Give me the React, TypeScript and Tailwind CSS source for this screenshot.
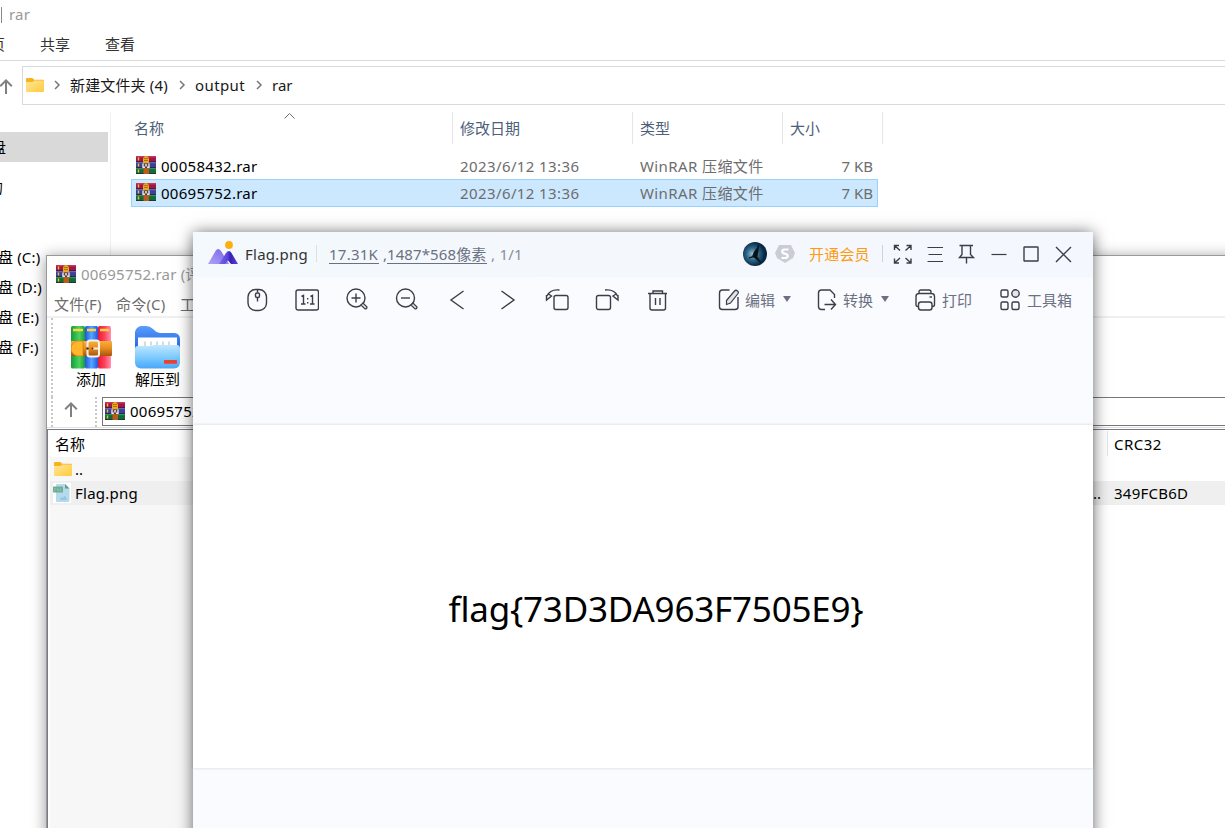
import React from "react";

function RarIcon() {
  return (
    <svg width="20" height="18" viewBox="0 0 20 18" className="block shrink-0">
      <rect x="0" y="0" width="20" height="6" fill="#a5153f" />
      <rect x="0" y="0" width="20" height="1.5" fill="#c23a60" />
      <rect x="0" y="6" width="20" height="6" fill="#3f3f98" />
      <rect x="0" y="6" width="20" height="1.2" fill="#6468bd" />
      <rect x="0" y="12" width="20" height="6" fill="#0f6b38" />
      <rect x="0" y="12" width="20" height="1.2" fill="#2f9455" />
      <path d="M0 5.5h20M0 11.5h20M0 17.5h20" stroke="#33203a" strokeWidth="0.8" />
      <path d="M2.5 1.5v3M2.5 7.5v3M2.5 13.5v3" stroke="#f3bd2b" strokeWidth="1.4" />
      <path d="M7.5 12h5.500v6H7.500z" fill="#b75d1c" />
      <path d="M7 7.500V2.600Q7.500 0 10 0t3 2.600V7.500z" fill="#e8aa20" />
      <path d="M8 2.500h4M8 4.500h4" stroke="#a45f0a" strokeWidth="0.800" />
      <path d="M8 7.500h4v4H8z" fill="#5c4540" />
      <path d="M7 7.500v3.800h2M13 7.500v3.800h-2" fill="none" stroke="#e9e4e4" strokeWidth="1.400" />
      <path d="M10 8v2.500" stroke="#fff" strokeWidth="1.300" />
    </svg>
  );
}

function Folder() {
  return (
    <svg width="18" height="14" viewBox="0 0 18 14" className="block shrink-0">
      <defs>
        <linearGradient id="fold" x1="0" y1="0" x2="1" y2="1">
          <stop offset="0" stopColor="#ffe69b" />
          <stop offset="1" stopColor="#ffcb3d" />
        </linearGradient>
      </defs>
      <path d="M0 1q0-1 1-1h5.500l1.600 1.700H17q1 0 1 1V12H0z" fill="#f8b31c" />
      <path d="M0 4h6.800l1.500-1.500H18V13q0 1-1 1H1q-1 0-1-1z" fill="url(#fold)" />
    </svg>
  );
}

function PngFile() {
  return (
    <svg width="18" height="20" viewBox="0 0 18 20" className="block shrink-0">
      <rect width="18" height="20" fill="#fff" />
      <path d="M3 2q0-1 1-1h8l4.500 4.500V18q0 1-1 1H4q-1 0-1-1z" fill="#b5d9ed" />
      <path d="M12 1v4.500h4.500z" fill="#5f9f8f" />
      <path d="M7 17q1-4 3-2 2-5 4 2z" fill="#94c6e2" />
      <rect x="0" y="3.500" width="10" height="6" rx="0.500" fill="#6fae96" />
      <path d="M1.500 8V5.500h1.300V7M4.500 8V5.500l1.500 2.500V5.500M8.500 5.500H7.500V8h1.200" fill="none" stroke="#94c3b1" strokeWidth="0.600" />
    </svg>
  );
}

function Books() {
  return (
    <svg width="41" height="43" viewBox="0 0 41 43" className="block">
      <defs>
        <linearGradient id="bg1"><stop stopColor="#159c3a" /><stop offset="0.6" stopColor="#4bd35f" /><stop offset="1" stopColor="#1a9a3c" /></linearGradient>
        <linearGradient id="bb1"><stop stopColor="#2553e0" /><stop offset="0.5" stopColor="#55a6ff" /><stop offset="1" stopColor="#2456df" /></linearGradient>
        <linearGradient id="br1"><stop stopColor="#e21d37" /><stop offset="0.5" stopColor="#ff4157" /><stop offset="1" stopColor="#ff91b4" /></linearGradient>
        <linearGradient id="belt" x1="0" y1="0" x2="0" y2="1"><stop stopColor="#f9b13c" /><stop offset="0.5" stopColor="#e58b1d" /><stop offset="1" stopColor="#a9530c" /></linearGradient>
      </defs>
      <rect x="0" y="0" width="14" height="42.500" rx="1.500" fill="url(#bg1)" />
      <rect x="14" y="0" width="13" height="42.500" rx="1.500" fill="url(#bb1)" />
      <rect x="27" y="0" width="13" height="42.500" rx="1.500" fill="url(#br1)" />
      <path d="M2 4h10M16 4h9M29 4h9" stroke="#ffd341" strokeWidth="2.400" />
      <rect x="0" y="15" width="41" height="15" rx="1" fill="url(#belt)" />
      <path d="M12 15H6Q0 17 0 22.500T6 30h6z" fill="#ffb52c" stroke="#d98310" strokeWidth="0.800" />
      <rect x="16.500" y="14.500" width="11.500" height="16" rx="2.500" fill="none" stroke="#f5f1ee" strokeWidth="2" />
      <path d="M22 22.500h6" stroke="#eee" strokeWidth="2" />
      <circle cx="16.500" cy="22.500" r="1.300" fill="#5b2c08" />
      <circle cx="21.500" cy="22.500" r="1" fill="#613309" />
    </svg>
  );
}

function BlueFolder() {
  return (
    <svg width="46" height="43" viewBox="0 0 46 43" className="block">
      <defs>
        <linearGradient id="bf" x1="0" y1="0" x2="0" y2="1"><stop stopColor="#5a9dfb" /><stop offset="0.500" stopColor="#2d6fe9" /></linearGradient>
        <linearGradient id="ff" x1="0" y1="0" x2="0" y2="1"><stop stopColor="#c1e8ff" /><stop offset="0.500" stopColor="#80ccff" /><stop offset="1" stopColor="#49a6f8" /></linearGradient>
      </defs>
      <path d="M0 6Q1 1 6 0h5q4 0 7 3 3 3.500 7 4h15q5 1 5 6v24H0z" fill="url(#bf)" />
      <path d="M3 11.500h39v14H3z" fill="#fff" />
      <path d="M10 15.500v5M16 15.500v4M22 15.500v4M28 15.500v4M34 15.500v4" stroke="#c9ced8" strokeWidth="1.500" />
      <path d="M0 23q0-3 3-3h11q3 0 5-1h23q3 0 3 4v13q0 6-6 6.500H6Q0 42 0 36z" fill="url(#ff)" />
      <rect x="29" y="34" width="13" height="3.800" rx="0.500" fill="#e8432f" />
    </svg>
  );
}

function Chevron() {
  return (
    <svg width="7" height="10" viewBox="0 0 7 10" className="block shrink-0" fill="none" stroke="#777" strokeWidth="1.500">
      <path d="M1 1l4 4-4 4" />
    </svg>
  );
}

function UpArrow() {
  return (
    <svg width="14" height="16" viewBox="0 0 14 16" className="block shrink-0" fill="none" stroke="#808080" strokeWidth="2">
      <path d="M7 15V1.500M1.200 7.200L7 1.400l5.800 5.800" />
    </svg>
  );
}

function Icon({ children, className = "" }: { children: React.ReactNode; className?: string }) {
  return (
    <svg width="24" height="24" viewBox="0 0 24 24" fill="none" stroke="#3a3e48" strokeWidth="1.400" className={`block shrink-0 ${className}`}>
      {children}
    </svg>
  );
}

function FileRow({ name, selected }: { name: string; selected?: boolean }) {
  return (
    <div className={`flex h-[28px] w-[747px] items-center border pl-1 ${selected ? "-mt-px border-[#99d1ff] bg-[#cce8ff]" : "border-transparent"}`}>
      <div className="-mt-[3px]"><RarIcon /></div>
      <div className="ml-[5px] w-[299px] tracking-[0.28px] text-black">{name}</div>
      <div className="w-[180px] tracking-[0.4px] text-[#6d6d6d]">2023/6/12 13:36</div>
      <div className="w-[170px] tracking-[0.4px] text-[#6d6d6d]">WinRAR 压缩文件</div>
      <div className="w-[63px] text-right text-[#6d6d6d]">7 KB</div>
    </div>
  );
}

function Explorer() {
  return (
    <div className="flex h-full flex-col">
      <div className="flex h-[29px] items-center pl-px">
        <div className="h-4 w-px bg-[#888]" />
        <div className="-mt-0.5 ml-[7px] tracking-[0.2px] text-[#999]">rar</div>
      </div>
      <div className="flex h-8 items-center border-b border-[#dadada] pb-0.5 text-[#333]">
        <div className="-ml-2.5 w-[50px]">页</div>
        <div className="w-[65px]">共享</div>
        <div>查看</div>
      </div>
      <div className="mt-[5px] flex h-[39px] items-center">
        <div className="-ml-px w-[23px] pt-[3px]"><UpArrow /></div>
        <div className="flex h-full flex-1 items-center border border-r-0 border-[#d9d9d9] pb-0.5 pl-[3px] text-[#191919]">
          <Folder />
          <div className="ml-[10px]"><Chevron /></div>
          <div className="ml-[9px] w-[99px] whitespace-nowrap tracking-[0.15px]">新建文件夹 (4)</div>
          <div className="ml-[10px]"><Chevron /></div>
          <div className="ml-[9px] w-[50px] tracking-[0.4px]">output</div>
          <div className="ml-[11px]"><Chevron /></div>
          <div className="ml-[9px]">rar</div>
        </div>
      </div>
      <div className="mt-[7px] flex flex-1">
        <div className="w-[111px] overflow-hidden border-r border-[#f0f0f0] pt-5 text-black">
          <div className="flex h-[30px] w-[108px] items-center bg-[#d9d9d9]"><span className="-ml-[9px]">盘</span></div>
          <div className="mt-[10px] flex h-[30px] items-center"><span className="-ml-[12px]">的</span></div>
          <div className="mt-[40px]">
            {["C", "D", "E", "F"].map((d) => (
              <div key={d} className="flex h-[30px] items-center"><span className="-ml-[2px] tracking-[0.15px]">盘 ({d}:)</span></div>
            ))}
          </div>
        </div>
        <div className="pl-5">
          <div className="flex h-8 items-center text-[#4c607a]">
            <div className="flex h-full w-[322px] items-center border-r border-[#e5e5e5] pl-[3px]">
              <div className="w-[150px]">名称</div>
              <svg width="11" height="6" viewBox="0 0 11 6" fill="none" stroke="#6d6d6d" className="-mt-[25px]"><path d="M.5 5.500l5-5 5 5" /></svg>
            </div>
            <div className="flex h-full w-[180px] items-center border-r border-[#e5e5e5] pl-[7px]">修改日期</div>
            <div className="flex h-full w-[150px] items-center border-r border-[#e5e5e5] pl-[7px]">类型</div>
            <div className="flex h-full w-[100px] items-center border-r border-[#e5e5e5] pl-[7px]">大小</div>
          </div>
          <div className="pt-2">
            <FileRow name="00058432.rar" />
            <FileRow name="00695752.rar" selected />
          </div>
        </div>
      </div>
    </div>
  );
}

function Archive() {
  return (
    <div className="absolute top-[255px] left-[46px] flex h-[640px] w-[1300px] flex-col border border-[#999] bg-white shadow-[0_2px_14px_rgba(0,0,0,0.42)]">
      <div className="flex h-[36px] shrink-0 items-center pl-[9px] text-[#999]">
        <RarIcon />
        <div className="ml-[5px] whitespace-nowrap tracking-[0.2px]">00695752.rar (评估版本)</div>
      </div>
      <div className="flex h-[26px] shrink-0 items-center border-b-2 border-[#f0f0f0] pl-[7px] text-[#6d6d6d]">
        <div className="w-[62px] tracking-[0.2px]">文件(F)</div>
        <div className="w-[64px] tracking-[0.2px]">命令(C)</div>
        <div>工具(S)</div>
      </div>
      <div className="flex h-[79px] shrink-0 pl-1 text-black">
        <div className="border-l-2 border-dotted border-[#c8c8c8]" />
        <div className="flex w-[76px] flex-col items-center pt-[8px]"><Books /><div>添加</div></div>
        <div className="flex w-[57px] flex-col items-center pt-[8px]"><BlueFolder /><div>解压到</div></div>
      </div>
      <div className="flex h-[31px] shrink-0 border-b border-[#e0e0e0] pl-1">
        <div className="border-l-2 border-dotted border-[#c8c8c8]" />
        <div className="w-[42px] pt-[5px] pl-[11px]"><UpArrow /></div>
        <div className="border-l-2 border-dotted border-[#c8c8c8]" />
        <div className="ml-[5px] flex h-[29px] flex-1 items-center border border-[#777] pb-px pl-0.5 text-black">
          <RarIcon /><div className="ml-[5px] tracking-[0.28px]">00695752.rar</div>
        </div>
      </div>
      <div className="mt-px flex-1 border-t border-l border-[#777b84] text-black">
        <div className="flex h-[27px] items-center pl-[7px]">
          <div className="w-[1052px]">名称</div>
          <div className="flex h-[25px] items-center border-l border-[#e5e5e5] pl-1.5 tracking-[0.5px]">CRC32</div>
        </div>
        <div className="flex h-6 items-center pl-0.5">
          <div className="flex h-full w-[1030px] items-center bg-[#f7f7f7] pl-1"><Folder /><span className="ml-[3px]">..</span></div>
        </div>
        <div className="flex h-6 items-center pl-0.5">
          <div className="flex h-full w-full items-center bg-[#efefef] pl-[3px]">
            <PngFile /><span className="ml-1 w-[1018px] tracking-[0.25px]">Flag.png</span>
            <span className="w-[21px] shrink-0">..</span><span className="tracking-[0.25px]">349FCB6D</span>
          </div>
        </div>
        <div className="ml-0.5 h-[350px] w-[1030px] bg-[#f7f7f7]" />
      </div>
    </div>
  );
}

function Viewer() {
  return (
    <div className="absolute top-[232px] left-[193px] flex h-[620px] w-[900px] flex-col bg-[#fafbff] shadow-[0_1px_15px_rgba(0,0,0,0.6)]">
      <div className="flex h-[45px] shrink-0 items-center bg-linear-to-r from-[#f4f9fd] to-[#f4f7fd] pb-[2px] pl-[15px]">
        <svg width="30" height="24" viewBox="0 0 30 24" className="mb-px block">
          <defs>
            <linearGradient id="m1" x1="0" y1="1" x2="1" y2="0"><stop stopColor="#b0a4f5" /><stop offset="1" stopColor="#7360e8" /></linearGradient>
            <linearGradient id="m2"><stop stopColor="#7a68ea" /><stop offset="0.450" stopColor="#5b44d8" /><stop offset="0.600" stopColor="#3a1fb7" /><stop offset="1" stopColor="#5a42dd" /></linearGradient>
          </defs>
          <path d="M0 23L7.500 10q2.500-4 5.500 0l8 13z" fill="url(#m1)" />
          <path d="M11 23l7-11q3-4 5.500 0L30 23h-7l-3-3.500-3 3.500z" fill="url(#m2)" />
          <circle cx="21" cy="4" r="3.900" fill="#ffae0d" />
        </svg>
        <div className="ml-[7px] w-[71px] tracking-[0.25px] text-[#333]">Flag.png</div>
        <div className="h-[17px] w-px bg-[#dce0e3]" />
        <div className="ml-3 flex whitespace-nowrap text-[#6b7182]">
          <span className="h-[20px] w-[50px] border-b border-[#6b7182] leading-[20px] tracking-[0.25px]">17.31K</span>
          <span className="w-2 pl-1 leading-[20px]">,</span>
          <span className="h-[20px] w-[100px] border-b border-[#6b7182] leading-[20px] tracking-[0.1px]">1487*568像素</span>
          <span className="pl-1 leading-[20px] tracking-[0.25px] text-[#888e9b]">, 1/1</span>
        </div>
        <div className="ml-auto flex w-[350px] items-center">
          <svg width="24" height="24" viewBox="0 0 24 24" className="block">
            <defs><radialGradient id="av" cx="0.4" cy="0.5"><stop stopColor="#9fc5d2" /><stop offset="0.500" stopColor="#2f6888" /><stop offset="1" stopColor="#062844" /></radialGradient></defs>
            <circle cx="12" cy="12" r="12" fill="url(#av)" />
            <path d="M15.500 3q-.5 3-2.500 4.500-2 2-3.500 7l-3.500 1.500 4-1 1.500 0.500 6 5-3.500-6q1.500-6 1.500-11.500z" fill="#061018" stroke="#061018" strokeWidth="0.800" />
          </svg>
          <svg width="20" height="18" viewBox="0 0 20 18" className="ml-2 block">
            <path d="M4 0h12l4 8-2 5-8 5-8-5-2-5z" fill="#cbcdd6" />
            <path d="M13.500 4.500H9q-3 1-1 3.500l4 1.500q2 2-1 3.500H6.500" fill="none" stroke="#fff" strokeWidth="2.200" />
          </svg>
          <div className="ml-[14px] w-[61px] tracking-[0.2px] whitespace-nowrap text-[#ff9a0c]">开通会员</div>
          <div className="ml-[12px] h-[17px] w-px bg-[#cfd3d9]" />
          <Icon className="ml-[8px]">
            <path d="M3.500 8V3.500H8M3.500 3.500l5.500 5M15.500 3.500H20V8M20 3.500l-5.500 5M3.500 16.500V21H8M3.500 21l5.500-5M15.500 21H20v-4.500M20 21l-5.500-5" />
          </Icon>
          <Icon className="ml-[9px]"><path d="M3.500 5.500h15.500M4.500 12.500h13.500M3.500 19.500h15.500" strokeWidth="1.200" /></Icon>
          <Icon className="ml-[8px]"><path d="M3.500 3.500H17M6 3.500v9L3.500 15.500h14L14.500 12.500v-9M10.500 15.500V21.500" /></Icon>
          <Icon className="ml-[8px]"><path d="M3.500 12.500h15" strokeWidth="1.200" /></Icon>
          <Icon className="ml-[8px]"><rect x="4" y="5" width="14" height="14" rx="0.500" /></Icon>
          <Icon className="ml-[8px]"><path d="M4 5l15 15M19 5L4 20" /></Icon>
        </div>
      </div>
      <div className="flex h-[46px] shrink-0 items-center pl-[52px] text-[#6b7182]">
        <div className="flex w-[472px] gap-[26px]">
          <Icon><rect x="3" y="1.500" width="18.500" height="21" rx="7.500" /><path d="M12.500 1.500v3M12.500 9.500v4" /><rect x="10.500" y="5" width="4" height="4.500" rx="1.500" /></Icon>
          <Icon><rect x="1" y="2" width="22.500" height="20" rx="2" /><path d="M6.500 8.500l2-1V16M6 16h4.500M15.500 8.500l2-1V16M15 16h4.500M12.700 10v1.500M12.700 14v1.500" strokeWidth="1.400" /></Icon>
          <Icon><circle cx="11" cy="10" r="9" /><path d="M11 5.500v9M6.500 10h9" /><path d="M16 17l2-2 4 4q0 2-2 2z" fill="#e1e3e8" strokeWidth="1.200" /></Icon>
          <Icon><circle cx="10.500" cy="10" r="9" /><path d="M6 10h9" /><path d="M16 17l2-2 4 4q0 2-2 2z" fill="#e1e3e8" strokeWidth="1.200" /></Icon>
          <Icon><path d="M18.500 3L6 12l12.500 9" /></Icon>
          <Icon><path d="M6.500 3L19 12 6.500 21" /></Icon>
          <Icon><rect x="9" y="7.500" width="14" height="14" rx="2" /><path d="M14.500 2Q5 1 2 8M1.500 7v5l5-4-3-2" /></Icon>
          <Icon><rect x="1.500" y="7.500" width="14" height="14" rx="2" /><path d="M10 2q9.500-1 12.500 6M23 7v5l-5-4 3-2" /></Icon>
          <Icon><path d="M3 5.500h19M8 5.500V3h9.500v2.500M5 5.500v14.500q0 2 2 2h11.500q2 0 2-2V5.500M10.500 10v7M15 10v7" /></Icon>
        </div>
        <Icon><path d="M12.500 2H5.500q-3 0-3 3v14q0 2.500 3 2.500H18q3 0 3-2.500V9" /><path d="M9.500 12.500l8-9.500q1.500-1.500 3 0 1.500 1 .5 2.500l-7.500 9.500-4 1.500z" fill="#e2e4e9" strokeWidth="1.200" /></Icon>
        <div className="ml-[4px] w-[30px]">编辑</div>
        <svg width="8" height="6" viewBox="0 0 8 6" className="mb-0.5 ml-[8px] block"><path d="M0 0h8L4 6z" fill="#6b7182" /></svg>
        <Icon className="ml-[24px]"><path d="M10 21.500H6.500q-3 0-3-3V5q0-3 3-3H15l4.500 4.500V10M9.500 16.500h11M16 11.500l4.500 5-4.500 5" /></Icon>
        <div className="ml-[4px] w-[30px]">转换</div>
        <svg width="8" height="6" viewBox="0 0 8 6" className="mb-0.5 ml-[8px] block"><path d="M0 0h8L4 6z" fill="#6b7182" /></svg>
        <Icon className="ml-[24px]"><path d="M6 5.500V4q0-2 2-2h8q2 0 2 2v1.500M5.500 18.500H5q-2 0-2-2V8.500q0-3 3-3H18.500q3 0 3 3v8q0 2-2 2H19" /><rect x="5.500" y="14" width="13.500" height="8" rx="2.500" /><path d="M16.500 9h2.500" /></Icon>
        <div className="ml-[5px] w-[30px]">打印</div>
        <Icon className="ml-[26px]"><rect x="3" y="2" width="7" height="7" rx="1.500" /><circle cx="17.500" cy="5.500" r="3.700" fill="#e4e6eb" /><rect x="3" y="14" width="7" height="7.500" rx="1.500" /><rect x="14" y="14" width="7" height="7.500" rx="1.500" /></Icon>
        <div className="ml-[5px] whitespace-nowrap">工具箱</div>
      </div>
      <div className="mt-[102px] flex h-[343px] shrink-0 items-center justify-center bg-white shadow-[0_0_3px_rgba(0,0,0,0.16)]">
        <div className="mt-[24px] mr-[-26px] text-[35px] leading-[50px] tracking-[-0.21px] whitespace-nowrap text-black">flag&#123;73D3DA963F7505E9&#125;</div>
      </div>
    </div>
  );
}

export default function App() {
  return (
    <div className="relative h-[828px] w-[1225px] overflow-hidden bg-white font-['Noto_Sans','Noto_Sans_CJK_SC',sans-serif] text-[15px] leading-5">
      <Explorer />
      <Archive />
      <Viewer />
    </div>
  );
}
